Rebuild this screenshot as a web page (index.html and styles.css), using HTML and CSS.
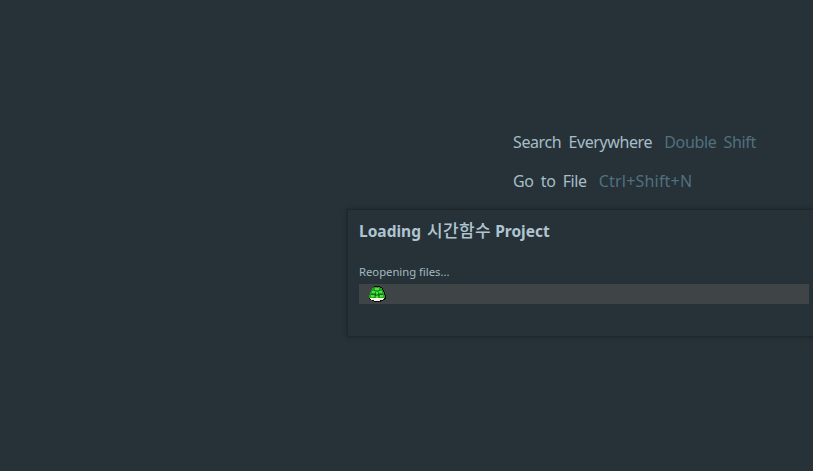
FILE: index.html
```html
<!DOCTYPE html>
<html lang="en">
<head>
<meta charset="utf-8">
<title>Loading Project</title>
<link rel="stylesheet" href="styles.css">
</head>
<body>
<main class="frame">
  <ul class="hints">
    <li class="hint"><span class="hint-name">Search Everywhere</span><span class="hint-key hint-key-words">Double Shift</span></li>
    <li class="hint"><span class="hint-name">Go to File</span><span class="hint-key">Ctrl+Shift+N</span></li>
  </ul>
  <section class="dialog">
    <h1 class="title">Loading <span class="title-ko">시간함수</span> Project</h1>
    <p class="status">Reopening files...</p>
    <div class="track">
      <svg class="turtle" width="18" height="16" viewBox="0 0 18 16" shape-rendering="crispEdges" aria-hidden="true">
        <path fill="#0a0a0a" d="M6 0h6v1h2v1h1v2h1v2h1v3h1v4h-1v1h-2v1h-2v1H6v-1H4v-1H2v-1H1V9h1V6h1V4h1V2h2z"/>
        <path fill="#1fa51f" d="M6 1h6v1h2v2h1v2h1v3h1v3H1V9h1V6h1V4h1V2h2z"/>
        <path fill="#55dd44" d="M7 2h4v2H7zM4 5h3v2H4zM11 5h3v2h-3zM8 6h2v2H8zM3 9h3v2H3zM12 9h3v2h-3zM8 10h2v2H8z"/>
        <path fill="#0d6f12" d="M6 4h1v1H6zM11 4h1v1h-1zM7 7h1v3H7zM10 7h1v3h-1zM3 8h4v1H3zM11 8h4v1h-4z"/>
        <path fill="#f8f6de" d="M2 12h14v1h-1v1h-3v1H6v-1H3v-1H2z"/>
      </svg>
    </div>
  </section>
</main>
</body>
</html>
```

FILE: styles.css
```css
html, body {
  margin: 0;
  height: 100%;
  overflow: hidden;
}

body {
  background: #263238;
  font-family: "Noto Sans", "Noto Sans CJK KR", sans-serif;
}

.frame {
  position: relative;
  height: 471px;
  overflow: hidden;
}

.hints {
  list-style: none;
  margin: 0;
  padding: 130px 0 0 513px;
  display: flex;
  flex-direction: column;
  gap: 15px;
}

.hint {
  display: flex;
  gap: 12px;
  height: 24px;
  line-height: 24px;
  white-space: nowrap;
}

.hint-name {
  font-size: 16px;
  letter-spacing: -0.4px;
  word-spacing: 3.5px;
  color: #a7bdc7;
}

.hint-key {
  font-size: 16px;
  letter-spacing: 0.2px;
  color: #52707f;
}

.hint-key-words {
  letter-spacing: -0.3px;
  word-spacing: 3px;
}

.dialog {
  position: absolute;
  left: 347px;
  top: 209px;
  width: 466px;
  height: 128px;
  box-sizing: border-box;
  padding: 11px 0 0 11px;
  background: #263238;
  border: 1px solid #1e272c;
  border-right: 0;
  box-shadow: 0 0 4px #1b2327;
}

.title {
  margin: 0;
  font-size: 15.5px;
  line-height: 20px;
  font-weight: 700;
  word-spacing: 2px;
  color: #b0c4d0;
}

.title-ko {
  font-size: 17px;
  font-weight: 500;
  letter-spacing: 0.4px;
  margin-right: -2px;
}

.status {
  margin: 21px 0 0;
  font-size: 11.25px;
  line-height: 20px;
  color: #a3b8c2;
}

.track {
  margin-top: 2px;
  width: 450px;
  height: 20px;
  display: flex;
  align-items: center;
  padding-left: 9px;
  box-sizing: border-box;
  background: #3f4446;
}
```
